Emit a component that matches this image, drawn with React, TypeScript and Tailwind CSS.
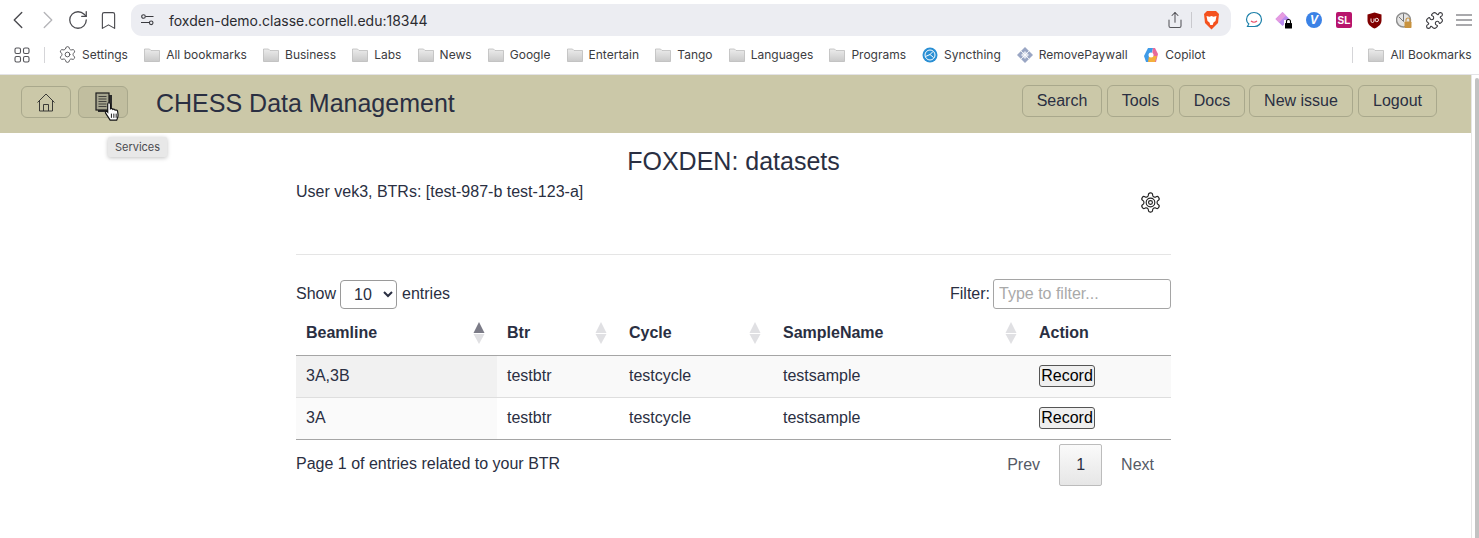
import { ChevronLeft, ChevronRight, RotateCw, Bookmark, Share, Puzzle, Settings } from 'lucide-react'

const bookmarks = ['All bookmarks', 'Business', 'Labs', 'News', 'Google', 'Entertain', 'Tango', 'Languages', 'Programs']
const rows = [
  { beamline: '3A,3B', striped: true },
  { beamline: '3A', striped: false },
]

function Folder() {
  return (
    <svg width="16" height="14" viewBox="0 0 16 14" className="shrink-0">
      <defs>
        <linearGradient id="folderFill" x1="0" y1="0" x2="0" y2="1">
          <stop offset="0" stopColor="#ececec" />
          <stop offset="1" stopColor="#c9c9c9" />
        </linearGradient>
      </defs>
      <path d="M.5 1h5l1.500 1.500h8.500v11H.5z" fill="url(#folderFill)" stroke="#b5b5b5" strokeWidth="0.7" />
    </svg>
  )
}

function SortArrows({ active = false }: { active?: boolean }) {
  return (
    <svg width="12" height="22" viewBox="0 0 12 22" className="shrink-0">
      <path d="M6 0l5.500 11H.5z" fill={active ? '#7b7b87' : '#e0e0e3'} />
      <path d="M6 22L.5 12h11z" fill="#e0e0e3" />
    </svg>
  )
}

function NavButton({ label, className = '' }: { label: string; className?: string }) {
  return (
    <button className={`h-[32px] rounded-[6px] border border-[#a9a88c] text-center text-[16px] text-[#2a2f42] ${className}`}>
      {label}
    </button>
  )
}

function HeadCell({ label, width, active, sort = true }: { label: string; width: string; active?: boolean; sort?: boolean }) {
  return (
    <th className={`${width} p-0 pl-[10px] pr-[12px] pt-[3px] text-left text-[16px] font-bold text-[#2a2f42]`}>
      <div className="flex items-center justify-between">
        {label}
        {sort && <SortArrows active={active} />}
      </div>
    </th>
  )
}

function ExtSlot({ children }: { children: React.ReactNode }) {
  return <span className="flex h-[20px] w-[30px] items-center justify-center">{children}</span>
}

export default function App() {
  return (
    <div className="relative h-[538px] w-[1479px] overflow-hidden bg-white font-['Liberation_Sans',sans-serif] text-[16px] text-[#2a2f42]">
      {/* browser toolbar */}
      <div className="flex h-[40px] items-center pl-[3px]">
        <ChevronLeft size={30} strokeWidth={1.1} className="text-[#4a4a4f]" />
        <ChevronRight size={30} strokeWidth={1.1} className="text-[#b5b5b9]" />
        <RotateCw size={22} strokeWidth={1.4} className="ml-[4px] text-[#4a4a4f]" />
        <Bookmark size={21} strokeWidth={1.3} className="ml-[9px] text-[#4a4a4f]" />
        <div className="ml-[12px] flex h-[32px] w-[1100px] items-center rounded-[11px] bg-[#ecedf2] pl-[10px] pr-[11px]">
          <svg width="13" height="12" viewBox="0 0 13 12" fill="none" stroke="#3a3a3f" strokeWidth="1.1">
            <circle cx="2.500" cy="2.500" r="1.800" />
            <path d="M4.500 2.500h8M0 8.500h8" />
            <circle cx="10.200" cy="8.800" r="1.800" />
          </svg>
          <span className="ml-[15px] font-['Inter',sans-serif] text-[14px] text-[#2b2b30]">foxden-demo.classe.cornell.edu:18344</span>
          <Share size={18} strokeWidth={1.4} className="ml-auto text-[#55555a]" />
          <span className="ml-[7px] h-[16px] w-px bg-[#c9c9ce]" />
          <svg width="17" height="20" viewBox="0 0 17 20" className="ml-[11px]">
            <path d="M4 1h9l3 3-1 9-6.500 6.500L2 13 1 4z" fill="#f4511e" />
            <path d="M3.500 6l3 .8 2-.8 2 .8 3-.8-1 5-2 1.500-.8 2.500h-2.400l-.8-2.500-2-1.500z" fill="#fff" />
          </svg>
        </div>
        <div className="ml-[8px] flex items-center">
          <ExtSlot>
            <svg width="18" height="18" viewBox="0 0 18 18"><path d="M9 1.500c4.200 0 7.500 3 7.500 7s-3 7-7 7H2.500l1.300-2.500C2.200 11.500 1.500 10 1.500 8.500c0-4 3.300-7 7.500-7z" fill="#fff" stroke="#1b7fa8" strokeWidth="1.200" /><path d="M6 10q3 2.500 6 0" fill="none" stroke="#e8506a" strokeWidth="1.200" /></svg>
          </ExtSlot>
          <ExtSlot>
            <svg width="18" height="18" viewBox="0 0 18 18">
              <path d="M7.500 1l7 7-7 7-7-7z" fill="#b98cf0" />
              <path d="M7.500 1l3.500 3.500-7 7L.5 8z" fill="#e59be0" />
              <rect x="9" y="9" width="9" height="9" fill="#fff" />
              <rect x="10" y="12" width="7" height="5.500" rx="0.500" fill="#000" />
              <path d="M11.500 12v-1.500a2 2 0 0 1 4 0V12" fill="none" stroke="#000" strokeWidth="1.100" />
            </svg>
          </ExtSlot>
          <ExtSlot>
            <span className="flex h-[16px] w-[16px] items-center justify-center rounded-full bg-[#3b82e6] text-[12px] font-bold italic text-white">V</span>
          </ExtSlot>
          <ExtSlot>
            <span className="flex h-[16px] w-[16px] items-center justify-center rounded-[2px] bg-[#b8146c] text-[10px] font-bold text-white">SL</span>
          </ExtSlot>
          <ExtSlot>
            <svg width="15" height="17" viewBox="0 0 15 17">
              <path d="M7.500.5l7 2v6c0 4-3.500 6.500-7 8-3.500-1.500-7-4-7-8v-6z" fill="#800000" />
              <path d="M4 6.500v2.500a1.500 1.500 0 0 0 3 0V6.500" fill="none" stroke="#fff" strokeWidth="0.900" />
              <circle cx="9.800" cy="8" r="1.700" fill="none" stroke="#fff" strokeWidth="0.900" />
            </svg>
          </ExtSlot>
          <ExtSlot>
            <svg width="16" height="17" viewBox="0 0 16 17">
              <circle cx="7.500" cy="8" r="7" fill="#e4e4e4" stroke="#8f8f8f" strokeWidth="1.500" />
              <path d="M7.500 1.500v8L3 5" fill="none" stroke="#777" strokeWidth="1" />
              <rect x="8.500" y="9.500" width="7" height="6.500" rx="0.800" fill="#c8923e" />
              <path d="M10 9.500V8a2 2 0 0 1 4 0v1.500" fill="none" stroke="#c8923e" strokeWidth="1.100" />
            </svg>
          </ExtSlot>
          <ExtSlot>
            <Puzzle size={19} strokeWidth={1.4} className="text-[#3a3a3f]" />
          </ExtSlot>
          <ExtSlot>
            <svg width="16" height="12" viewBox="0 0 16 12" stroke="#55555a" strokeWidth="1.100">
              <path d="M0 1h16M0 6h16M0 11h16" />
            </svg>
          </ExtSlot>
        </div>
      </div>

      {/* bookmarks bar */}
      <div className="flex h-[35px] items-center border-b border-[#e3e3e6] pb-[5px] pl-[14px] font-['Inter',sans-serif] text-[12px] text-[#3c3c41]">
        <svg width="16" height="16" viewBox="0 0 16 16" fill="none" stroke="#55555a" strokeWidth="1.100">
          <rect x="1" y="1" width="5.500" height="5.500" rx="1.500" />
          <rect x="9.500" y="1" width="5.500" height="5.500" rx="1.500" />
          <rect x="1" y="9.500" width="5.500" height="5.500" rx="1.500" />
          <rect x="9.500" y="9.500" width="5.500" height="5.500" rx="1.500" />
        </svg>
        <span className="ml-[14px] h-[16px] w-px bg-[#d5d5d8]" />
        <Settings size={19} strokeWidth={1.1} className="ml-[13px] text-[#4a4a4f]" />
        <span className="ml-[5px] w-[46px]">Settings</span>
        {bookmarks.map((b) => (
          <span key={b} className="ml-[16.2px] flex items-center gap-[6px]">
            <Folder />
            {b}
          </span>
        ))}
        <span className="ml-[16px] flex items-center gap-[6px]">
          <svg width="16" height="16" viewBox="0 0 16 16">
            <circle cx="8" cy="8" r="7.500" fill="#2a8fd4" />
            <circle cx="8" cy="8" r="5" fill="none" stroke="#fff" strokeWidth="1" />
            <path d="M3.500 9.500L8 7.500l3-3M8 7.500l3.500 3" stroke="#fff" strokeWidth="1" fill="none" />
          </svg>
          Syncthing
        </span>
        <span className="ml-[16px] flex items-center gap-[6px]">
          <svg width="16" height="16" viewBox="0 0 16 16">
            <path d="M8 0l8 8-8 8-8-8z" fill="#9aa6c4" />
            <path d="M8 4l4 4-4 4-4-4z" fill="#dfe3ee" />
            <path d="M4 4l8 8M12 4l-8 8" stroke="#fff" strokeWidth="0.800" />
          </svg>
          RemovePaywall
        </span>
        <span className="ml-[15.5px] flex items-center gap-[6px]">
          <svg width="16" height="16" viewBox="0 0 16 16">
            <path d="M5 1h5l-3 14H3L1 9z" fill="#3f9be8" />
            <path d="M10 1h2l3 6-2 8H8z" fill="#e86a9a" />
            <path d="M6 9h8l-2 6H5z" fill="#f4b03c" />
            <circle cx="8" cy="8" r="2.500" fill="#fff" />
          </svg>
          Copilot
        </span>
        <span className="ml-[147px] h-[16px] w-px bg-[#d5d5d8]" />
        <span className="ml-[15px] flex items-center gap-[6px]">
          <Folder />
          All Bookmarks
        </span>
      </div>

      {/* app header */}
      <header className="flex h-[58px] w-[1471px] items-center bg-[#cbc8a8] pl-[21px] pr-[34px]">
        <button className="mb-[4px] flex h-[32px] w-[50px] items-center justify-center rounded-[6px] border border-[#a9a88c]">
          <svg width="18" height="19" viewBox="0 0 18 19" fill="none" stroke="#2b2b2b" strokeWidth="0.900">
            <path d="M.5 9.500L9 1l8.500 8.500M2.500 7.500V18h13V7.500M6.500 18v-6.500h5V18" />
          </svg>
        </button>
        <button className="mb-[4px] ml-[7px] flex h-[32px] w-[50px] items-center justify-center rounded-[6px] border border-[#a9a88c] bg-[#c1be9f]">
          <svg width="18" height="21" viewBox="0 0 18 21" className="translate-x-[1px]">
            <rect x="3" y="3" width="14" height="17" fill="#2b2b2b" />
            <rect x="1" y="1" width="13" height="17" fill="#a5a48e" stroke="#1c1c1c" strokeWidth="1.200" />
            <path d="M3.500 4.500h8M3.500 7h8M3.500 9.500h8M3.500 12h8M3.500 14.500h8" stroke="#2a2a2a" strokeWidth="0.800" />
          </svg>
        </button>
        <span className="ml-[28px] text-[25px] text-[#2a2f42]">CHESS Data Management</span>
        <nav className="mb-[6px] ml-auto flex gap-[5px]">
          <NavButton label="Search" className="w-[80px]" />
          <NavButton label="Tools" className="w-[67px]" />
          <NavButton label="Docs" className="-mr-px w-[66px]" />
          <NavButton label="New issue" className="w-[104px]" />
          <NavButton label="Logout" className="w-[79px]" />
        </nav>
      </header>

      {/* hand cursor over the Services button */}
      <svg width="18" height="19" viewBox="0 0 17 18" className="absolute left-[104px] top-[102px]">
        <path d="M4.500.7c1 0 1.600.6 1.600 1.500v4.300c.9-.6 2-.3 2.200.5 1-.5 2-.2 2.200.7 1-.4 2.300 0 2.400 1.300l.4 3.300c.1 1.800-.5 3-1.300 4.900H5.800L1.500 10.500c-.6-1 .5-2 1.500-1.300l.5.500V2.200c0-.9.200-1.500 1-1.500z" fill="#fff" stroke="#111" strokeWidth="1.100" />
        <path d="M7 11v4M9.300 11v4M11.500 11v4" stroke="#111" strokeWidth="0.900" />
      </svg>

      {/* tooltip */}
      <div className="absolute left-[108px] top-[137px] flex h-[20px] w-[59px] items-center justify-center rounded-[2px] bg-[#e8e8e8] font-['Inter',sans-serif] text-[11px] text-[#4a4a4f] shadow-[0_1px_4px_rgba(0,0,0,0.25)]">
        Services
      </div>

      {/* scrollbar */}
      <div className="absolute right-0 top-[75px] h-[463px] w-[8px] border-l border-[#e6e6e6] bg-white">
        <div className="ml-[3px] mt-[3px] h-[460px] w-[4px] rounded-t-full bg-[#c2c2c2]" />
      </div>

      {/* page body */}
      <main className="ml-[296px] w-[875px] pt-[13px]">
        <h1 className="text-center text-[25px] leading-[30px]">FOXDEN: datasets</h1>
        <div className="flex h-[78px] items-start justify-between">
          <span className="mt-[6px] leading-[20px]">User vek3, BTRs: [test-987-b test-123-a]</span>
          <svg width="23" height="23" viewBox="0 0 24 24" fill="none" stroke="#222" strokeWidth="1.200" strokeLinecap="round" strokeLinejoin="round" className="mr-[9px] mt-[15px]">
            <path d="M12.220 2h-.44a2 2 0 0 0-2 2v.18a2 2 0 0 1-1 1.730l-.43.250a2 2 0 0 1-2 0l-.15-.08a2 2 0 0 0-2.730.730l-.22.380a2 2 0 0 0 .730 2.730l.15.100a2 2 0 0 1 1 1.720v.510a2 2 0 0 1-1 1.740l-.15.090a2 2 0 0 0-.730 2.730l.22.380a2 2 0 0 0 2.730.730l.15-.08a2 2 0 0 1 2 0l.43.250a2 2 0 0 1 1 1.730V20a2 2 0 0 0 2 2h.44a2 2 0 0 0 2-2v-.18a2 2 0 0 1 1-1.730l.43-.250a2 2 0 0 1 2 0l.15.080a2 2 0 0 0 2.730-.730l.22-.390a2 2 0 0 0-.730-2.730l-.15-.080a2 2 0 0 1-1-1.740v-.500a2 2 0 0 1 1-1.740l.15-.090a2 2 0 0 0 .730-2.730l-.22-.380a2 2 0 0 0-2.730-.730l-.15.080a2 2 0 0 1-2 0l-.43-.250a2 2 0 0 1-1-1.730V4a2 2 0 0 0-2-2z" />
            <circle cx="12" cy="12" r="4.500" />
            <circle cx="12" cy="12" r="2" />
          </svg>
        </div>
        <div className="border-t border-[#e5e5e5]" />

        <div className="mt-[24px] flex h-[30px] items-center">
          <span>Show</span>
          <select className="ml-[4px] h-[29px] w-[57px] rounded-[4px] border border-[#9a9a9a] bg-white pl-[9px] text-[16px]" defaultValue="10">
            <option>10</option>
          </select>
          <span className="ml-[5px]">entries</span>
          <label className="ml-auto">Filter:</label>
          <input
            placeholder="Type to filter..."
            className="ml-[3px] h-[30px] w-[178px] rounded-[3px] border border-[#a5a5a5] px-[5px] text-[16px] placeholder:text-[#a9a9a9]"
          />
        </div>

        <table className="w-[875px] table-fixed border-collapse">
          <thead>
            <tr className="h-[46px] border-b border-[#a5a5a5]">
              <HeadCell label="Beamline" width="w-[201px]" active />
              <HeadCell label="Btr" width="w-[122px]" />
              <HeadCell label="Cycle" width="w-[154px]" />
              <HeadCell label="SampleName" width="w-[256px]" />
              <HeadCell label="Action" width="w-[142px]" sort={false} />
            </tr>
          </thead>
          <tbody>
            {rows.map((r) => (
              <tr key={r.beamline} className={`h-[42px] border-b ${r.striped ? 'border-[#dedede] bg-[#f9f9f9]' : 'border-[#a5a5a5]'}`}>
                <td className={`p-0 pl-[10px] ${r.striped ? 'bg-[#f1f1f1]' : 'bg-[#fafafa]'}`}>{r.beamline}</td>
                <td className="p-0 pl-[10px]">testbtr</td>
                <td className="p-0 pl-[10px]">testcycle</td>
                <td className="p-0 pl-[10px]">testsample</td>
                <td className="p-0 pl-[10px]">
                  <button className="h-[22px] w-[56px] rounded-[3px] border border-[#555] bg-[#efefef] text-[16px] leading-none text-black">Record</button>
                </td>
              </tr>
            ))}
          </tbody>
        </table>

        <div className="flex items-start">
          <span className="mt-[14px] leading-[20px]">Page 1 of entries related to your BTR</span>
          <div className="ml-auto mr-[17px] mt-[4px] flex items-center text-[#555a66]">
            <span>Prev</span>
            <span className="ml-[19px] flex h-[42px] w-[43px] items-center justify-center rounded-[2px] border border-[#bcbcbc] bg-gradient-to-b from-[#fafafa] to-[#e6e6e6] text-[#2a2f42]">1</span>
            <span className="ml-[19px]">Next</span>
          </div>
        </div>
      </main>
    </div>
  )
}
